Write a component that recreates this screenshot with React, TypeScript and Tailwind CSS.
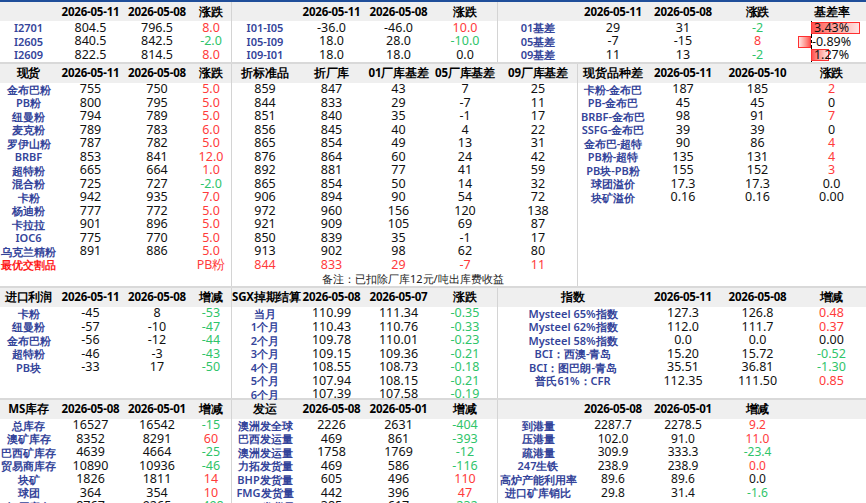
import React from "react";

type Row = string[];

const tone = (v: string) => {
  if (v.startsWith("r:")) return { t: v.slice(2), c: "text-[#ff3b3b]" };
  if (v.startsWith("g:")) return { t: v.slice(2), c: "text-[#2fc46a]" };
  return { t: v, c: "text-[#111]" };
};

function Block({
  cols,
  head,
  rows,
  width,
  labelSpan,
  mono,
  plain,
  border = true,
}: {
  cols: string;
  head: string[];
  rows: Row[];
  width: string;
  labelSpan?: string;
  mono?: boolean;
  plain?: boolean;
  border?: boolean;
}) {
  return (
    <div className={`${width} shrink-0 ${border ? "border-r border-[#d4d4d4]" : ""}`}>
      <div className={`grid ${cols} h-[19px] bg-[#efefef] items-center text-center font-bold text-[11.5px] tracking-[-0.2px] text-black whitespace-nowrap`}>
        {head.map((h, i) => (
          <div key={i} className={i === 0 && labelSpan ? labelSpan : ""}>{h}</div>
        ))}
      </div>
      {rows.map((r, ri) => (
        <div key={ri} className={`grid ${cols} h-[13.5px] items-center text-center leading-none`}>
          {r.map((v, i) => {
            if (i === 0 && !plain)
              return (
                <div key={i} className={`${labelSpan ?? ""} text-[11px] font-semibold whitespace-nowrap ${v.startsWith("r:") ? "text-[#ff1a1a]" : "text-[#34449a]"}`}>
                  {v.replace("r:", "")}
                </div>
              );
            const { t, c } = tone(v);
            return (
              <div key={i} className={`${c} whitespace-nowrap ${mono ? "font-['Liberation_Mono'] text-[12px]" : "text-[12.5px]"}`}>{t}</div>
            );
          })}
        </div>
      ))}
    </div>
  );
}

function BarCell({ v }: { v: number }) {
  const w = Math.abs(v) * 14.3;
  return (
    <div className="relative h-full">
      <div className="absolute left-[14px] top-0 h-full border-l border-dashed border-black" />
      {v > 0 ? (
        <div className="absolute left-[14px] top-[1px] h-[12px] bg-gradient-to-r from-[#ff5050] to-[#ffe5e5] border border-[#ff3030]" style={{ width: w }} />
      ) : (
        <div className="absolute top-[1px] h-[12px] bg-gradient-to-l from-[#ff5050] to-[#ffe5e5] border border-[#ff3030]" style={{ width: w, left: 14 - w }} />
      )}
      <div className="relative text-center text-[12.5px] text-[#111] leading-[13.5px]">{v.toFixed(2)}%</div>
    </div>
  );
}

const c4 = "grid-cols-[57px_67px_66px_42px]";
const m4 = "grid-cols-[66px_67px_67px_66px]";

export default function App() {
  return (
    <div className="w-[866px] h-[503px] overflow-hidden bg-white font-['Liberation_Sans','Noto_Sans_CJK_SC',sans-serif] border-t-2 border-[#1f4e9a]">
      {/* band 1 */}
      <div className="flex border-b-2 border-[#d9d9d9]">
        <Block width="w-[232px]" cols={c4} head={["", "2026-05-11", "2026-05-08", "涨跌"]}
          rows={[["I2701", "804.5", "796.5", "r:8.0"], ["I2605", "840.5", "842.5", "g:-2.0"], ["I2609", "822.5", "814.5", "r:8.0"]]} />
        <Block width="w-[266px]" cols={m4} head={["", "2026-05-11", "2026-05-08", "涨跌"]}
          rows={[["I01-I05", "-36.0", "-46.0", "r:10.0"], ["I05-I09", "18.0", "28.0", "g:-10.0"], ["I09-I01", "18.0", "18.0", "0.0"]]} />
        <div className="flex">
          <Block width="w-[299px]" border={false} cols="grid-cols-[80px_70px_70px_79px]" head={["", "2026-05-11", "2026-05-08", "涨跌"]}
            rows={[["01基差", "29", "31", "g:-2"], ["05基差", "-7", "-15", "r:8"], ["09基差", "11", "13", "g:-2"]]} />
          <div className="w-[69px]">
            <div className="h-[19px] bg-[#efefef] text-center font-bold text-[11.5px] leading-[19px]">基差率</div>
            <div className="h-[13.5px]"><BarCell v={3.43} /></div>
            <div className="h-[13.5px]"><BarCell v={-0.89} /></div>
            <div className="h-[13.5px]"><BarCell v={1.27} /></div>
          </div>
        </div>
      </div>

      {/* band 2 */}
      <div className="flex border-b-2 border-[#d9d9d9]">
        <div className="flex flex-col">
          <div className="flex">
            <Block width="w-[232px]" cols={c4} head={["现货", "2026-05-11", "2026-05-08", "涨跌"]}
              rows={[
                ["金布巴粉", "755", "750", "r:5.0"], ["PB粉", "800", "795", "r:5.0"], ["纽曼粉", "794", "789", "r:5.0"],
                ["麦克粉", "789", "783", "r:6.0"], ["罗伊山粉", "787", "782", "r:5.0"], ["BRBF", "853", "841", "r:12.0"],
                ["超特粉", "665", "664", "r:1.0"], ["混合粉", "725", "727", "g:-2.0"], ["卡粉", "942", "935", "r:7.0"],
                ["杨迪粉", "777", "772", "r:5.0"], ["卡拉拉", "901", "896", "r:5.0"], ["IOC6", "775", "770", "r:5.0"],
                ["乌克兰精粉", "891", "886", "r:5.0"], ["r:最优交割品", "", "", "r:PB粉"],
              ]} />
            <Block width="w-[346px]" plain cols="grid-cols-[66px_67px_67px_66px_80px]" head={["折标准品", "折厂库", "01厂库基差", "05厂库基差", "09厂库基差"]}
              rows={[
                ["859", "847", "43", "7", "25"], ["844", "833", "29", "-7", "11"], ["851", "840", "35", "-1", "17"],
                ["856", "845", "40", "4", "22"], ["865", "854", "49", "13", "31"], ["876", "864", "60", "24", "42"],
                ["892", "881", "77", "41", "59"], ["865", "854", "50", "14", "32"], ["906", "894", "90", "54", "72"],
                ["972", "960", "156", "120", "138"], ["921", "909", "105", "69", "87"], ["850", "839", "35", "-1", "17"],
                ["913", "902", "98", "62", "80"], ["r:844", "r:833", "r:29", "r:-7", "r:11"],
              ]} />
          </div>
          <div className="h-[14px] flex">
            <div className="w-[232px] border-r border-[#d4d4d4]" />
            <div className="w-[346px] border-r border-[#d4d4d4] text-[11px] leading-[14px] text-[#222] font-['Liberation_Serif','Noto_Serif_CJK_SC','Noto_Sans_CJK_SC',serif] pl-[90px] whitespace-nowrap">
              备注：已扣除厂库12元/吨出库费收益
            </div>
          </div>
        </div>
        <Block width="w-[288px]" border={false} cols="grid-cols-[70px_70px_79px_69px]" head={["现货品种差", "2026-05-11", "2026-05-10", "涨跌"]}
          rows={[
            ["卡粉-金布巴", "187", "185", "r:2"], ["PB-金布巴", "45", "45", "0"], ["BRBF-金布巴", "98", "91", "r:7"],
            ["SSFG-金布巴", "39", "39", "0"], ["金布巴-超特", "90", "86", "r:4"], ["PB粉-超特", "135", "131", "r:4"],
            ["PB块-PB粉", "155", "152", "r:3"], ["球团溢价", "17.3", "17.3", "0.0"], ["块矿溢价", "0.16", "0.16", "0.00"],
          ]} />
      </div>

      {/* band 3 */}
      <div className="flex h-[112px] border-b-2 border-[#d9d9d9]">
        <Block width="w-[232px]" cols={c4} head={["进口利润", "2026-05-11", "2026-05-08", "增减"]}
          rows={[["卡粉", "-45", "8", "g:-53"], ["纽曼粉", "-57", "-10", "g:-47"], ["金布巴粉", "-56", "-12", "g:-44"], ["超特粉", "-46", "-3", "g:-43"], ["PB块", "-33", "17", "g:-50"]]} />
        <Block width="w-[266px]" cols={m4} head={["SGX掉期结算", "2026-05-08", "2026-05-07", "涨跌"]}
          rows={[
            ["当月", "110.99", "111.34", "g:-0.35"], ["1个月", "110.43", "110.76", "g:-0.33"], ["2个月", "109.78", "110.01", "g:-0.23"],
            ["3个月", "109.15", "109.36", "g:-0.21"], ["4个月", "108.55", "108.73", "g:-0.18"], ["5个月", "107.94", "108.15", "g:-0.21"],
            ["6个月", "107.39", "107.58", "g:-0.19"],
          ]} />
        <Block width="w-[368px]" border={false} cols="grid-cols-[80px_70px_70px_79px_69px]" labelSpan="col-span-2"
          head={["指数", "2026-05-11", "2026-05-08", "增减"]}
          rows={[
            ["Mysteel 65%指数", "127.3", "126.8", "r:0.48"], ["Mysteel 62%指数", "112.0", "111.7", "r:0.37"],
            ["Mysteel 58%指数", "0.0", "0.0", "0.00"], ["BCI：西澳-青岛", "15.20", "15.72", "g:-0.52"],
            ["BCI：图巴朗-青岛", "35.51", "36.81", "g:-1.30"], ["普氏61%：CFR", "112.35", "111.50", "r:0.85"],
          ]} />
      </div>

      {/* band 4 */}
      <div className="flex">
        <Block width="w-[232px]" cols={c4} head={["MS库存", "2026-05-08", "2026-05-01", "增减"]}
          rows={[
            ["总库存", "16527", "16542", "g:-15"], ["澳矿库存", "8352", "8291", "r:60"], ["巴西矿库存", "4639", "4664", "g:-25"],
            ["贸易商库存", "10890", "10936", "g:-46"], ["块矿", "1826", "1811", "r:14"], ["球团", "364", "354", "r:10"],
            ["钢厂库存", "8767", "9265", "g:-498"],
          ]} />
        <Block width="w-[266px]" cols={m4} head={["发运", "2026-05-08", "2026-05-01", "增减"]}
          rows={[
            ["澳洲发全球", "2226", "2631", "g:-404"], ["巴西发运量", "469", "861", "g:-393"], ["澳洲发运量", "1758", "1769", "g:-12"],
            ["力拓发货量", "469", "586", "g:-116"], ["BHP发货量", "605", "496", "r:110"], ["FMG发货量", "442", "396", "r:47"],
            ["VALE发货量", "385", "617", "g:-232"],
          ]} />
        <Block width="w-[368px]" border={false} mono cols="grid-cols-[80px_70px_70px_79px_69px]" head={["", "2026-05-08", "2026-05-01", "增减", ""]}
          rows={[
            ["到港量", "2287.7", "2278.5", "r:9.2", ""], ["压港量", "102.0", "91.0", "r:11.0", ""], ["疏港量", "309.9", "333.3", "g:-23.4", ""],
            ["247生铁", "238.9", "238.9", "r:0.0", ""], ["高炉产能利用率", "89.6", "89.6", "0.0", ""], ["进口矿库销比", "29.8", "31.4", "g:-1.6", ""],
          ]} />
      </div>
    </div>
  );
}
